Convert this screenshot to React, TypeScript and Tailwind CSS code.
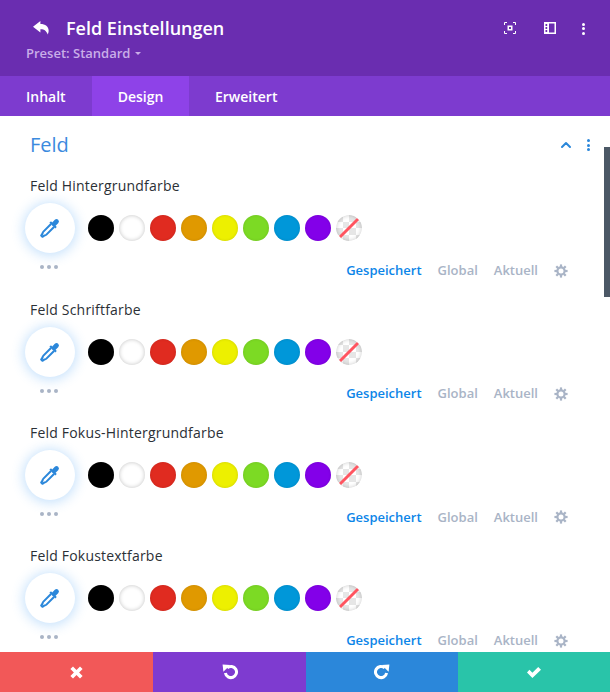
import { ChevronUp } from "lucide-react";

const swatches = [
  "bg-[#000000] shadow-[inset_0_0_2px_rgba(0,0,0,0.3)]",
  "bg-[#ffffff] shadow-[inset_0_0_4px_rgba(0,0,0,0.24)]",
  "bg-[#e02b20] shadow-[inset_0_0_3px_rgba(0,0,0,0.12)]",
  "bg-[#e09900] shadow-[inset_0_0_3px_rgba(0,0,0,0.12)]",
  "bg-[#edf000] shadow-[inset_0_0_3px_rgba(0,0,0,0.14)]",
  "bg-[#7cda24] shadow-[inset_0_0_3px_rgba(0,0,0,0.12)]",
  "bg-[#0097d9] shadow-[inset_0_0_3px_rgba(0,0,0,0.12)]",
  "bg-[#8300e9] shadow-[inset_0_0_3px_rgba(0,0,0,0.12)]",
];

function Dots({ color }: { color: string }) {
  return (
    <div className="flex flex-col gap-[1.5px]">
      <span className={`w-[3px] h-[3px] rounded-full ${color}`} />
      <span className={`w-[3px] h-[3px] rounded-full ${color}`} />
      <span className={`w-[3px] h-[3px] rounded-full ${color}`} />
    </div>
  );
}

function Dropper() {
  return (
    <svg width="20" height="20" viewBox="0 0 20 20" fill="none">
      <path d="M11 6 L3.4 13.6 Q2.6 14.4 2.6 15.4 L1.2 17.6 L2.4 18.8 L4.6 17.4 Q5.6 17.4 6.4 16.6 L14 9" stroke="#2b87da" strokeWidth="2" strokeLinejoin="round" />
      <path d="M9.4 4.8 L15.2 10.6 L16.8 9 L15.6 7.8 L18.2 5.2 Q19.8 3.4 18.2 1.8 Q16.5 0.2 14.8 1.8 L12.2 4.4 L11 3.2 Z" fill="#2b87da" />
    </svg>
  );
}

function Gear() {
  return (
    <svg width="14" height="14" viewBox="0 0 14 14">
      <circle cx="7" cy="7" r="3.6" fill="none" stroke="#a9b4c6" strokeWidth="2.2" />
      <g stroke="#a9b4c6" strokeWidth="2.2">
        <path d="M7 0.4V3" />
        <path d="M7 11V13.6" />
        <path d="M0.4 7H3" />
        <path d="M11 7H13.6" />
        <path d="M2.3 2.3L4.1 4.1" />
        <path d="M9.9 9.9L11.7 11.7" />
        <path d="M11.7 2.3L9.9 4.1" />
        <path d="M4.1 9.9L2.3 11.7" />
      </g>
    </svg>
  );
}

function Transparent() {
  return (
    <div className="relative w-[26px] h-[26px] rounded-full overflow-hidden bg-white shrink-0">
      <div className="absolute inset-0 grid grid-cols-4 grid-rows-4">
        {Array.from({ length: 16 }).map((_, i) => (
          <div key={i} className={(i + (i >> 2)) % 2 === 0 ? "bg-[#e6e6e6]" : "bg-white"} />
        ))}
      </div>
      <div className="absolute inset-0 rounded-full shadow-[inset_0_0_4px_rgba(0,0,0,0.22)]" />
      <svg className="absolute inset-0" width="26" height="26" viewBox="0 0 26 26">
        <path d="M4 22 L22 4" stroke="#ff5560" strokeWidth="3" />
      </svg>
    </div>
  );
}

function Row({ label }: { label: string }) {
  return (
    <div className="h-[123.33px] pl-[25px] pr-[42px] shrink-0">
      <div className="pl-[5px] h-[20px] leading-[20px] text-[14px] font-medium text-[#2b3036] tracking-[0.2px]">{label}</div>
      <div className="flex items-center mt-[7px] h-[50px]">
        <div className="w-[50px] h-[50px] rounded-full bg-white flex items-center justify-center shadow-[0_1px_12px_2px_rgba(80,165,245,0.32)] shrink-0">
          <Dropper />
        </div>
        <div className="flex items-center gap-[5px] ml-[13px]">
          {swatches.map((s, i) => (
            <div key={i} className={`w-[26px] h-[26px] rounded-full ${s} shrink-0`} />
          ))}
          <Transparent />
        </div>
      </div>
      <div className="flex items-start justify-between h-[20px] mt-[2px]">
        <div className="flex gap-[3px] ml-[15px] mt-[10px]">
          <span className="w-[4px] h-[4px] rounded-full bg-[#a9b4c6]" />
          <span className="w-[4px] h-[4px] rounded-full bg-[#a9b4c6]" />
          <span className="w-[4px] h-[4px] rounded-full bg-[#a9b4c6]" />
        </div>
        <div className="flex items-center h-[20px] mt-[5.4px] text-[13px] font-semibold text-[#a9b4c6]">
          <span className="text-[#0c85e8]">Gespeichert</span>
          <span className="ml-[16px]">Global</span>
          <span className="ml-[16px]">Aktuell</span>
          <span className="ml-[16px] flex"><Gear /></span>
        </div>
      </div>
    </div>
  );
}

export default function App() {
  return (
    <div className="w-[610px] h-[692px] flex flex-col overflow-hidden bg-white font-['Open_Sans',sans-serif]">
      <header className="h-[76px] bg-[#6a2db0] shrink-0 flex justify-between relative">
        <div>
          <div className="flex items-center h-[20px] mt-[18px] ml-[33px]">
            <svg width="17" height="14" viewBox="0 0 17 14">
              <path d="M7.4 0 L0 5.8 L7.4 11.6 V8.2 C10.5 8 12.8 9 14.8 13.4 C17.4 7.4 13.8 3 7.4 3 Z" fill="#fff" />
            </svg>
            <span className="ml-[16px] text-[18px] font-semibold text-white leading-[20px]">Feld Einstellungen</span>
          </div>
          <div className="ml-[26px] mt-[6px] flex items-center text-[13px] font-semibold text-[#c9aee8] leading-[18px]">
            Preset: Standard
            <span className="ml-[5px] mt-[1px] w-0 h-0 border-x-[3px] border-x-transparent border-t-[3px] border-t-[#c9aee8]" />
          </div>
        </div>
        <div className="flex items-start mt-[22px] mr-[25px]">
          <svg width="12" height="12" viewBox="0 0 12 12" fill="none">
            <path d="M0.5 3V0.5H3M9 0.5H11.5V3M11.5 9V11.5H9M3 11.5H0.5V9" stroke="#fff" />
            <path d="M3.5 3.5H8.5V8.5H3.5Z M5 5V7H7V5Z" fill="#fff" fillRule="evenodd" />
          </svg>
          <svg className="ml-[28px]" width="12" height="12" viewBox="0 0 12 12">
            <path d="M0 0H12V12H0Z M5 1.5V10.5H10.5V1.5Z M1.5 2V4H3.2V2Z M1.5 5V7H3.2V5Z M1.5 8V10H3.2V8Z" fill="#fff" fillRule="evenodd" />
          </svg>
          <div className="ml-[26px] mt-[0.5px]"><Dots color="bg-white" /></div>
        </div>
      </header>

      <nav className="h-[40px] bg-[#7d3bcf] shrink-0 flex text-[14px] font-semibold text-white">
        <div className="w-[92px] pl-[26px] flex items-center">Inhalt</div>
        <div className="w-[97px] flex items-center justify-center bg-[#8e42e8]">Design</div>
        <div className="pl-[26px] flex items-center">Erweitert</div>
      </nav>

      <main className="relative flex-1 min-h-0 overflow-hidden">
        <div className="flex items-center justify-between h-[28px] mt-[15px] pl-[30px] pr-[20px]">
          <span className="text-[20px] font-normal text-[#3b8ade]">Feld</span>
          <div className="flex items-center gap-[13px] text-[#2b87da]">
            <ChevronUp size={16} strokeWidth={3} />
            <Dots color="bg-[#2b87da]" />
          </div>
        </div>
        <div className="flex flex-col mt-[17.4px]">
          <Row label="Feld Hintergrundfarbe" />
          <Row label="Feld Schriftfarbe" />
          <Row label="Feld Fokus-Hintergrundfarbe" />
          <Row label="Feld Fokustextfarbe" />
        </div>
        <div className="absolute right-0 top-[31px] w-[6px] h-[150px] bg-[#4c5866]" />
      </main>

      <footer className="h-[40px] shrink-0 grid grid-cols-[153px_153px_152px_152px] text-white">
        <div className="bg-[#f25858] flex items-center justify-center">
          <svg width="13" height="13" viewBox="0 0 13 13"><path d="M3 0.4 L6.5 3.9 L10 0.4 L12.6 3 L9.1 6.5 L12.6 10 L10 12.6 L6.5 9.1 L3 12.6 L0.4 10 L3.9 6.5 L0.4 3 Z" fill="#fff" /></svg>
        </div>
        <div className="bg-[#7e3bd0] flex items-center justify-center">
          <svg width="16" height="16" viewBox="0 0 16 16" fill="none">
            <path d="M3.4 9 A5.6 5.6 0 1 0 5.2 3.8" stroke="#fff" strokeWidth="3" />
            <path d="M0.6 0.6 L8.2 1 L1.4 7.8 Z" fill="#fff" />
          </svg>
        </div>
        <div className="bg-[#2b87da] flex items-center justify-center">
          <svg width="16" height="16" viewBox="0 0 16 16" fill="none">
            <path d="M12.6 9 A5.6 5.6 0 1 1 10.8 3.8" stroke="#fff" strokeWidth="3" />
            <path d="M15.4 0.6 L7.8 1 L14.6 7.8 Z" fill="#fff" />
          </svg>
        </div>
        <div className="bg-[#29c4a9] flex items-center justify-center">
          <svg width="14" height="11" viewBox="0 0 14 11"><path d="M2.4 2.8 L5.4 5.8 L11.2 0 L14 2.8 L5.4 11 L0 5.4 Z" fill="#fff" /></svg>
        </div>
      </footer>
    </div>
  );
}
